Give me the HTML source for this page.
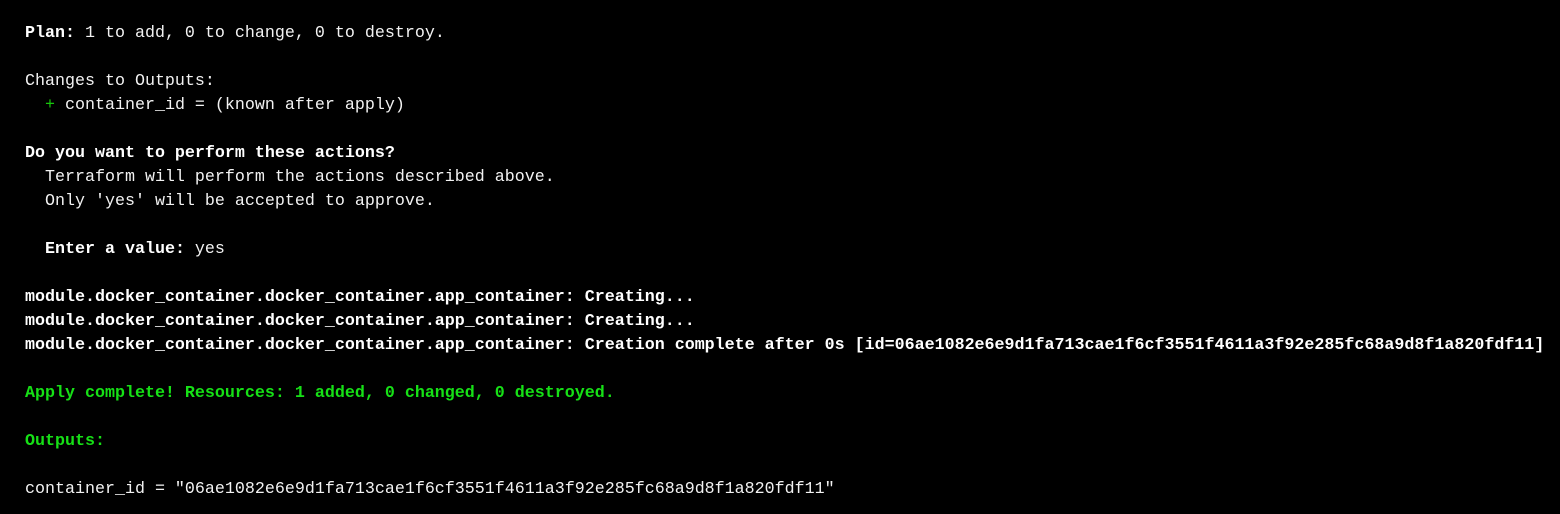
<!DOCTYPE html><html><head><style>
html,body{margin:0;background:#000;width:1560px;height:514px;overflow:hidden}
pre{margin:0;position:absolute;left:25px;top:22px;font-family:"Liberation Mono",monospace;font-size:16.67px;line-height:24px;color:#f2f2f2}
b{font-weight:bold;color:#fff}
.g{color:#16c60c}
.G{color:#16e016;font-weight:bold}
</style></head><body><pre><b>Plan:</b> 1 to add, 0 to change, 0 to destroy.

Changes to Outputs:
  <span class="g">+</span> container_id = (known after apply)

<b>Do you want to perform these actions?</b>
  Terraform will perform the actions described above.
  Only 'yes' will be accepted to approve.

  <b>Enter a value:</b> yes

<b>module.docker_container.docker_container.app_container: Creating...</b>
<b>module.docker_container.docker_container.app_container: Creating...</b>
<b>module.docker_container.docker_container.app_container: Creation complete after 0s [id=06ae1082e6e9d1fa713cae1f6cf3551f4611a3f92e285fc68a9d8f1a820fdf11]</b>

<span class="G">Apply complete! Resources: 1 added, 0 changed, 0 destroyed.</span>

<span class="G">Outputs:</span>

container_id = "06ae1082e6e9d1fa713cae1f6cf3551f4611a3f92e285fc68a9d8f1a820fdf11"</pre></body></html>
